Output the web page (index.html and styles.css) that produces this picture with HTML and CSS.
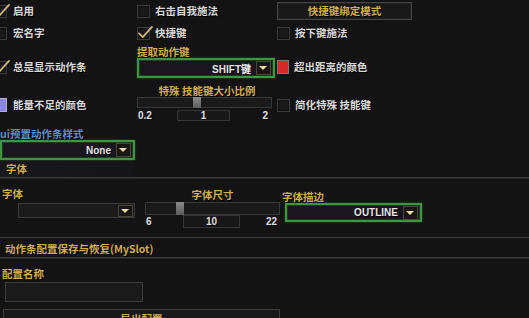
FILE: index.html
```html
<!DOCTYPE html>
<html lang="zh-CN">
<head>
    <meta charset="UTF-8">
    <title>动作条设置</title>
    <link rel="stylesheet" href="styles.css">
</head>
<body>
    <div class="opts">
        <!-- row 1 -->
        <label class="check on"><span class="box"><svg class="tick" viewBox="0 0 16 14"><path d="M1 8 L5 12 L15 1"/></svg></span>启用</label>
        <label class="check"><span class="box"></span>右击自我施法</label>
        <div class="cell-btn"><div class="btn">快捷键绑定模式</div></div>

        <!-- row 2 -->
        <label class="check"><span class="box"></span>宏名字</label>
        <label class="check on"><span class="box"><svg class="tick" viewBox="0 0 16 14"><path d="M1 8 L5 12 L15 1"/></svg></span>快捷键</label>
        <label class="check"><span class="box"></span>按下键施法</label>

        <!-- row 3 -->
        <label class="check on low"><span class="box"><svg class="tick" viewBox="0 0 16 14"><path d="M1 8 L5 12 L15 1"/></svg></span>总是显示动作条</label>
        <div class="field">
            <div class="lbl gold">提取动作键</div>
            <div class="drop green w138">
                <span class="drop-val">SHIFT键</span>
                <span class="arrow"></span>
            </div>
        </div>
        <div class="swatch-item low"><span class="swatch red"></span>超出距离的颜色</div>

        <!-- row 4 -->
        <div class="swatch-item mid"><span class="swatch purple"></span>能量不足的颜色</div>
        <div class="slider-group scale">
            <div class="lbl gold center">特殊 技能键大小比例</div>
            <div class="track"><span class="thumb" style="left: 55px"></span></div>
            <div class="values">
                <span>0.2</span>
                <span class="val-box">1</span>
                <span class="right">2</span>
            </div>
        </div>
        <label class="check mid"><span class="box"></span>简化特殊 技能键</label>

        <!-- row 5 -->
        <div class="field preset">
            <div class="lbl blue">ui预置动作条样式</div>
            <div class="drop green w135">
                <span class="drop-val">None</span>
                <span class="arrow"></span>
            </div>
        </div>
    </div>

    <div class="section-head"><span class="gold">字体</span></div>

    <div class="font-row">
        <div class="font-face">
            <div class="lbl gold">字体</div>
            <div class="drop plain">
                <span class="drop-val"></span>
                <span class="arrow"></span>
            </div>
        </div>
        <div class="slider-group size">
            <div class="lbl gold center">字体尺寸</div>
            <div class="track tall"><span class="thumb" style="left: 30px"></span></div>
            <div class="values">
                <span>6</span>
                <span class="val-box">10</span>
                <span class="right">22</span>
            </div>
        </div>
        <div class="font-outline">
            <div class="lbl gold">字体描边</div>
            <div class="drop green">
                <span class="drop-val">OUTLINE</span>
                <span class="arrow"></span>
            </div>
        </div>
    </div>

    <div class="section-head slot"><span class="gold">动作条配置保存与恢复(MySlot)</span></div>

    <div class="slot-body">
        <div class="lbl gold">配置名称</div>
        <div class="input"></div>
        <div class="wide-btn">导出配置</div>
    </div>
</body>
</html>
```

FILE: styles.css
```css
* {
    box-sizing: border-box;
}

body {
    margin: 0;
    width: 529px;
    height: 318px;
    overflow: hidden;
    background: #131313;
    color: #d9d9d9;
    font-family: "Noto Sans CJK SC", "Liberation Sans", sans-serif;
    font-size: 10.5px;
    font-weight: bold;
    text-shadow: 1px 1px 0 #000;
}

.gold {
    color: #cfae4c;
}

.blue {
    color: #5b8fc9;
}

.lbl {
    line-height: 12px;
    height: 12px;
    white-space: nowrap;
}

.lbl.center {
    text-align: center;
}

/* top option grid */
.opts {
    display: grid;
    grid-template-columns: 143px 140px 1fr;
    grid-template-rows: 22px 22px 36px 44px 36px;
    margin-left: -6px;
}

.check,
.swatch-item {
    display: flex;
    align-items: center;
    gap: 5px;
    line-height: 14px;
    white-space: nowrap;
}

.opts > :nth-child(3n+1).check,
.opts > :nth-child(3n+1).swatch-item {
    gap: 6px;
}

.low {
    align-self: end;
    margin-bottom: 6px;
}

.mid {
    align-self: start;
    margin-top: 18px;
}

.box {
    position: relative;
    width: 13px;
    height: 13px;
    flex: none;
    border: 1px solid #3a3a3a;
    background: #1a1a1a;
    box-shadow: inset 0 0 2px #000;
}

.tick {
    position: absolute;
    left: 0;
    top: -2px;
    width: 15px;
    height: 13px;
    overflow: visible;
}

.tick path {
    fill: none;
    stroke: #cdb57a;
    stroke-width: 2;
    stroke-linecap: round;
    stroke-linejoin: round;
}

.cell-btn {
    display: flex;
    align-items: center;
}

.btn {
    width: 135px;
    height: 18px;
    line-height: 16px;
    border: 1px solid #444;
    background: #181818;
    color: #cfae4c;
    text-align: center;
    box-shadow: inset 0 0 0 1px #222;
}

.swatch {
    width: 13px;
    height: 14px;
    flex: none;
    border: 1px solid #777;
}

.swatch.red {
    background: #d42a2a;
    width: 12px;
}

.swatch.purple {
    background: #8d86e6;
    border-color: #b0b0c8;
}

.field .lbl {
    margin-top: 2px;
}

.field.preset .lbl {
    margin-top: 4px;
    margin-left: 6px;
}

/* dropdowns */
.drop {
    display: flex;
    align-items: center;
    justify-content: flex-end;
    gap: 5px;
    background: #19161e;
    padding-right: 2px;
    font-family: "Liberation Sans", sans-serif;
    font-size: 10px;
    color: #e6e6e6;
}

.drop.green {
    border: 2px solid #3f9640;
    box-shadow: inset 0 0 0 1px #1c3a1c, 0 0 2px #2a5a2a;
}

.drop.w138 {
    width: 138px;
    height: 20px;
}

.drop.w135 {
    width: 135px;
    height: 20px;
    margin-left: 6px;
}

.drop.plain {
    width: 117px;
    height: 15px;
    margin-left: 18px;
    margin-top: 3px;
    border: 1px solid #3a3a3a;
    background: #1b1b1b;
    padding-right: 1px;
}

.arrow {
    position: relative;
    width: 15px;
    height: 14px;
    flex: none;
    border: 1px solid #4a4438;
    background: #1a1712;
}

.arrow::after {
    content: "";
    position: absolute;
    left: 2px;
    top: 4px;
    border-left: 4.5px solid transparent;
    border-right: 4.5px solid transparent;
    border-top: 4px solid #ecdca6;
}

.drop.plain .arrow {
    height: 12px;
}

.drop.plain .arrow::after {
    top: 3px;
}

/* sliders */
.slider-group.scale {
    padding-top: 5px;
}

.track {
    position: relative;
    height: 11px;
    border: 1px solid #383838;
    background: #1a1a1a;
}

.scale .track {
    width: 135px;
}

.track.tall {
    height: 13px;
    margin-top: 1px;
}

.thumb {
    position: absolute;
    top: -1px;
    bottom: -1px;
    width: 8px;
    background: linear-gradient(#8a8a8a, #5c5c5c);
}

.values {
    display: grid;
    grid-template-columns: 40px 53px 1fr;
    align-items: center;
    height: 12px;
    margin-top: 1px;
    font-family: "Liberation Sans", sans-serif;
    font-size: 10px;
    color: #e0e0e0;
}

.values span:first-child {
    padding-left: 1px;
}

.val-box {
    height: 11px;
    line-height: 10px;
    border: 1px solid #363636;
    background: #171717;
    text-align: center;
}

.values .right {
    text-align: right;
    padding-right: 9px;
}

/* font section */
.section-head {
    height: 18px;
    line-height: 18px;
    padding-left: 6px;
    border-bottom: 1px solid #3c3c3c;
    box-shadow: 0 1px 0 #252525;
    background: linear-gradient(90deg, #18171b 0, #161518 130px, transparent 136px);
}

.font-row {
    display: flex;
    height: 59px;
    padding-top: 1px;
}

.font-face {
    width: 145px;
    padding-top: 9px;
}

.font-face .lbl {
    padding-left: 2px;
}

.slider-group.size {
    width: 135px;
    padding-top: 10px;
}

.size .values {
    grid-template-columns: 38px 57px 1fr;
    margin-top: 0;
    height: 13px;
}

.size .val-box {
    height: 13px;
    line-height: 12px;
}

.size .values .right {
    padding-right: 3px;
}

.font-outline {
    margin-left: 2px;
    padding-top: 12px;
}

.font-outline .drop {
    width: 137px;
    height: 19px;
    margin-left: 3px;
}

.section-head.slot {
    height: 21px;
    line-height: 22px;
    padding-left: 5px;
    border-top: 1px solid #3c3c3c;
    background: none;
}

/* slot config */
.slot-body {
    padding-top: 10px;
}

.slot-body .lbl {
    padding-left: 2px;
}

.input {
    width: 138px;
    height: 20px;
    margin: 2px 0 0 5px;
    border: 1px solid #3c3c3c;
    background: #1a1a1a;
}

.wide-btn {
    width: 277px;
    height: 20px;
    margin: 7px 0 0 3px;
    border: 1px solid #3c3c3c;
    background: #191919;
    color: #cfae4c;
    text-align: center;
    line-height: 18px;
}
```
